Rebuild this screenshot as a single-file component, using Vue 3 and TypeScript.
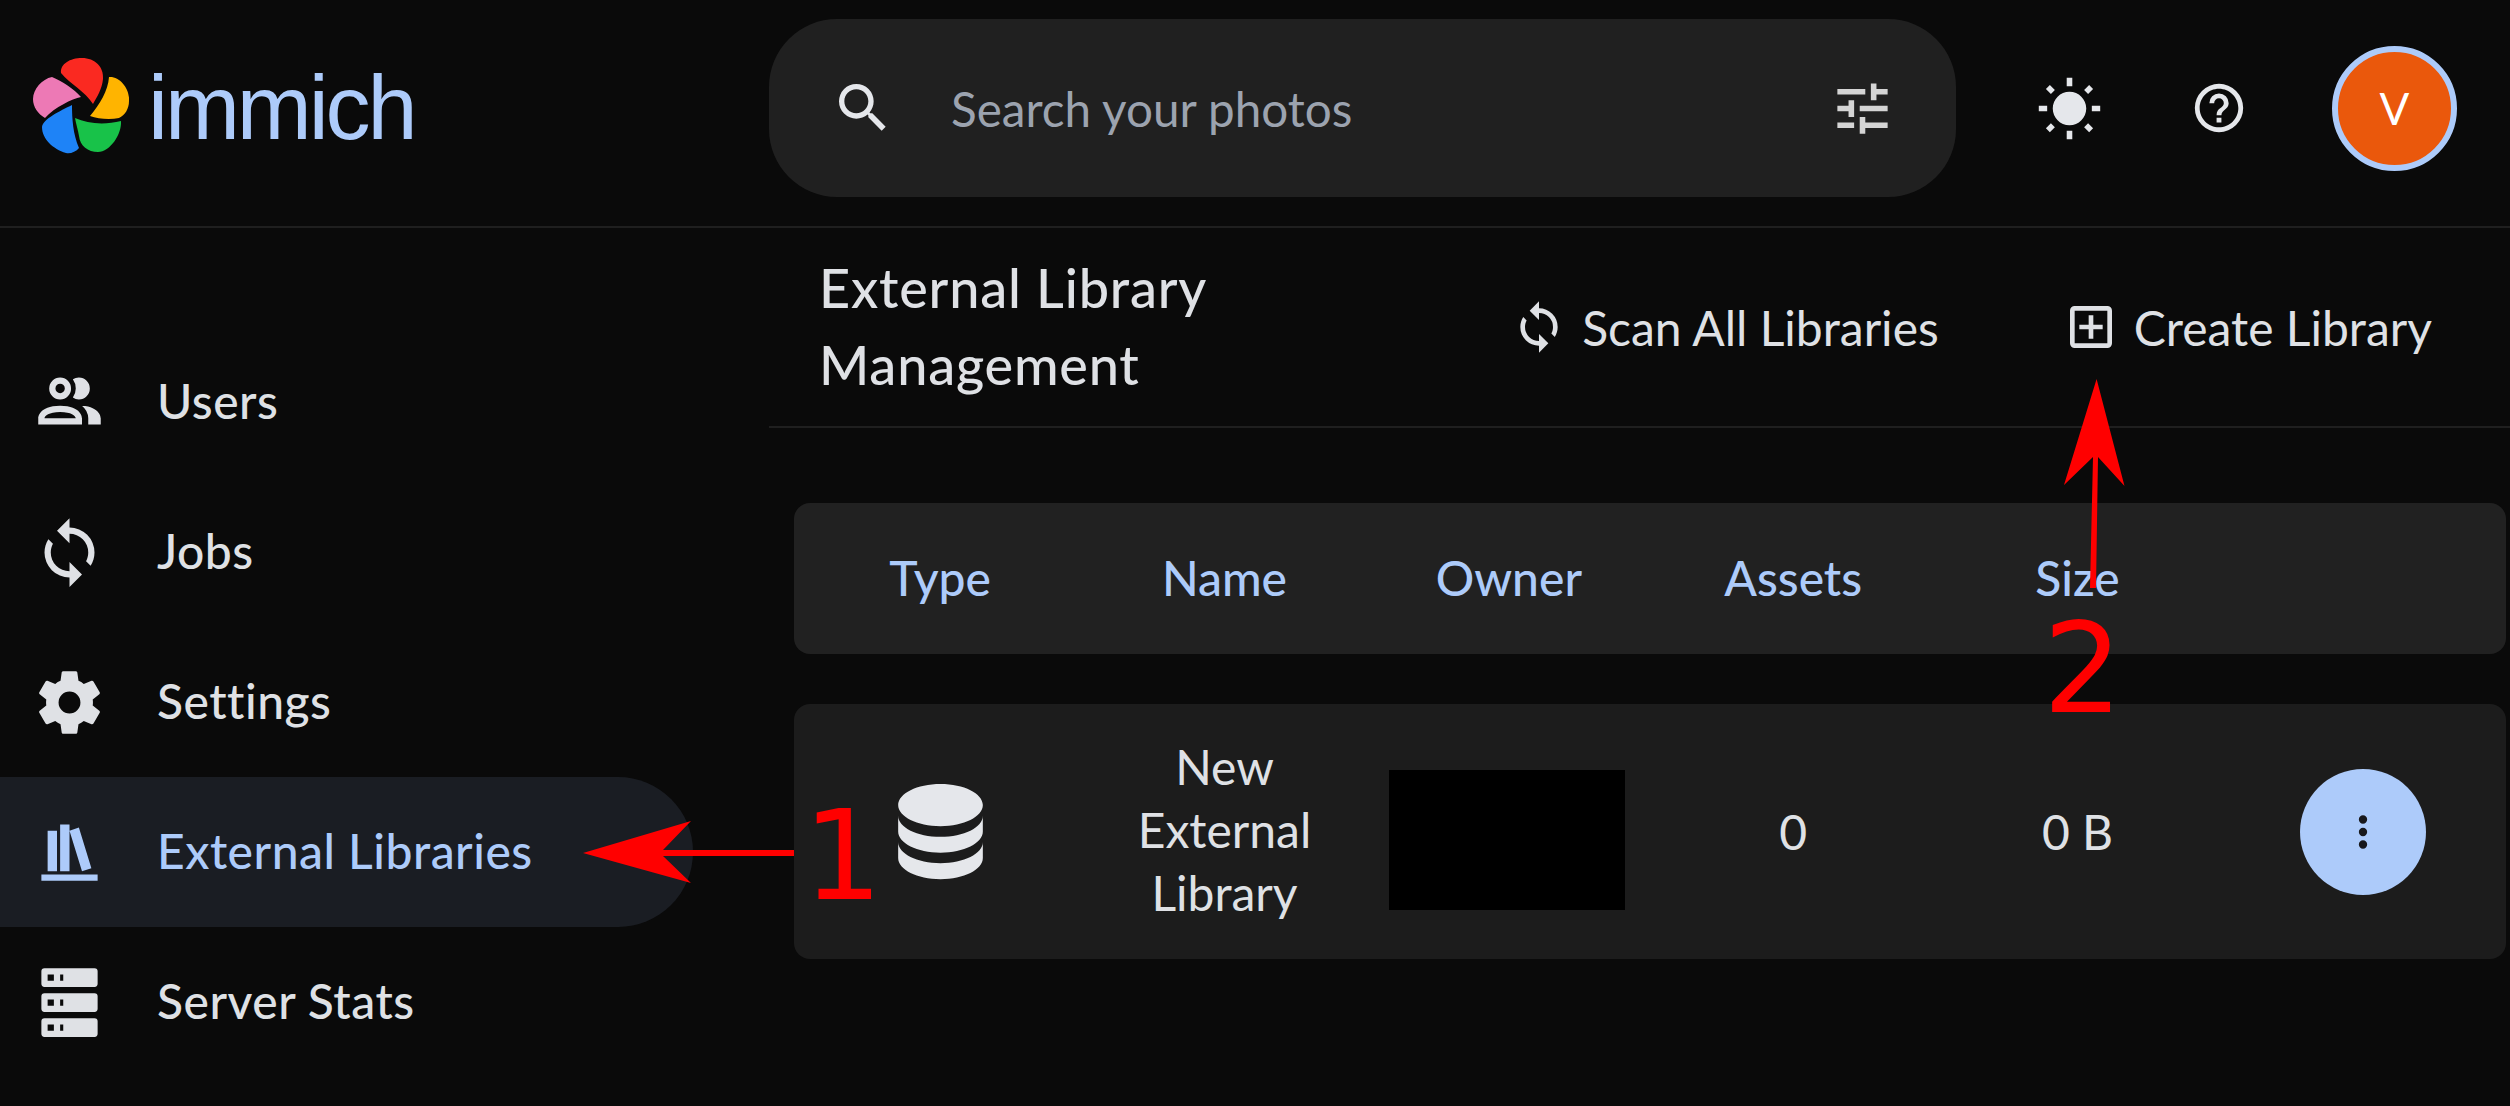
<script setup lang="ts">
type NavItem = { label: string; icon: string; active?: boolean }

const navItems: NavItem[] = [
  {
    label: 'Users',
    icon: 'M13.07 10.41A5 5 0 0 0 13.07 4.59A3.39 3.39 0 0 1 15 4A3.5 3.5 0 0 1 15 11A3.39 3.39 0 0 1 13.07 10.41M5.5 7.5A3.5 3.5 0 1 1 9 11A3.5 3.5 0 0 1 5.5 7.5M7.5 7.5A1.5 1.5 0 1 0 9 6A1.5 1.5 0 0 0 7.5 7.5M16 17V19H2V17S2 13 9 13 16 17 16 17M14 17C13.86 16.22 12.67 15 9 15S4.07 16.31 4 17M15.95 13A5.32 5.32 0 0 1 18 17V19H22V17S22 13.37 15.94 13Z',
  },
  {
    label: 'Jobs',
    icon: 'M12,18A6,6 0 0,1 6,12C6,11 6.25,10.03 6.7,9.2L5.24,7.74C4.46,8.97 4,10.43 4,12A8,8 0 0,0 12,20V23L16,19L12,15M12,4V1L8,5L12,9V6A6,6 0 0,1 18,12C18,13 17.75,13.97 17.3,14.8L18.76,16.26C19.54,15.03 20,13.57 20,12A8,8 0 0,0 12,4Z',
  },
  {
    label: 'Settings',
    icon: 'M12,15.5A3.5,3.5 0 0,1 8.5,12A3.5,3.5 0 0,1 12,8.5A3.5,3.5 0 0,1 15.5,12A3.5,3.5 0 0,1 12,15.5M19.43,12.97C19.47,12.65 19.5,12.33 19.5,12C19.5,11.67 19.47,11.34 19.43,11L21.54,9.37C21.73,9.22 21.78,8.95 21.66,8.73L19.66,5.27C19.54,5.05 19.27,4.96 19.05,5.05L16.56,6.05C16.04,5.66 15.5,5.32 14.87,5.07L14.5,2.42C14.46,2.18 14.25,2 14,2H10C9.75,2 9.54,2.18 9.5,2.42L9.13,5.07C8.5,5.32 7.96,5.66 7.44,6.05L4.95,5.05C4.73,4.96 4.46,5.05 4.34,5.27L2.34,8.73C2.21,8.95 2.27,9.22 2.46,9.37L4.57,11C4.53,11.34 4.5,11.67 4.5,12C4.5,12.33 4.53,12.65 4.57,12.97L2.46,14.63C2.27,14.78 2.21,15.05 2.34,15.27L4.34,18.73C4.46,18.95 4.73,19.03 4.95,18.95L7.44,17.94C7.96,18.34 8.5,18.68 9.13,18.93L9.5,21.58C9.54,21.82 9.75,22 10,22H14C14.25,22 14.46,21.82 14.5,21.58L14.87,18.93C15.5,18.67 16.04,18.34 16.56,17.94L19.05,18.95C19.27,19.03 19.54,18.95 19.66,18.73L21.66,15.27C21.78,15.05 21.73,14.78 21.54,14.63L19.43,12.97Z',
  },
  {
    label: 'External Libraries',
    icon: 'M9 3V18H12V3H9M12 5L16 18L19 17L15 4L12 5M5 5V18H8V5H5M3 19V21H21V19H3Z',
    active: true,
  },
  {
    label: 'Server Stats',
    icon: 'M4,1H20A1,1 0 0,1 21,2V6A1,1 0 0,1 20,7H4A1,1 0 0,1 3,6V2A1,1 0 0,1 4,1M4,9H20A1,1 0 0,1 21,10V14A1,1 0 0,1 20,15H4A1,1 0 0,1 3,14V10A1,1 0 0,1 4,9M4,17H20A1,1 0 0,1 21,18V22A1,1 0 0,1 20,23H4A1,1 0 0,1 3,22V18A1,1 0 0,1 4,17M9,5H10V3H9V5M9,13H10V11H9V13M9,21H10V19H9V21M5,3V5H7V3H5M5,11V13H7V11H5M5,19V21H7V19H5Z',
  },
]

const columns = ['Type', 'Name', 'Owner', 'Assets', 'Size', '']

const icons = {
  magnify: 'M9.5,3A6.5,6.5 0 0,1 16,9.5C16,11.11 15.41,12.59 14.44,13.73L14.71,14H15.5L20.5,19L19,20.5L14,15.5V14.71L13.73,14.44C12.59,15.41 11.11,16 9.5,16A6.5,6.5 0 0,1 3,9.5A6.5,6.5 0 0,1 9.5,3M9.5,5C7,5 5,7 5,9.5C5,12 7,14 9.5,14C12,14 14,12 14,9.5C14,7 12,5 9.5,5Z',
  tune: 'M3,17V19H9V17H3M3,5V7H13V5H3M13,21V19H21V17H13V15H11V21H13M7,9V11H3V13H7V15H9V9H7M21,13V11H11V13H21M15,9H17V7H21V5H17V3H15V9Z',
  sun: 'M3.55 19.09L4.96 20.5L6.76 18.71L5.34 17.29M12 6C8.69 6 6 8.69 6 12S8.69 18 12 18 18 15.31 18 12C18 8.68 15.31 6 12 6M20 13H23V11H20M17.24 18.71L19.04 20.5L20.45 19.09L18.66 17.29M20.45 5L19.04 3.6L17.24 5.39L18.66 6.81M13 1H11V4H13M6.76 5.39L4.96 3.6L3.55 5L5.34 6.81L6.76 5.39M1 13H4V11H1M13 20H11V23H13',
  help: 'M11,18H13V16H11V18M12,2A10,10 0 0,0 2,12A10,10 0 0,0 12,22A10,10 0 0,0 22,12A10,10 0 0,0 12,2M12,20C7.59,20 4,16.41 4,12C4,7.59 7.59,4 12,4C16.41,4 20,7.59 20,12C20,16.41 16.41,20 12,20M12,6A4,4 0 0,0 8,10H10A2,2 0 0,1 12,8A2,2 0 0,1 14,10C14,12 11,11.75 11,15H13C13,12.75 16,12.5 16,10A4,4 0 0,0 12,6Z',
  sync: 'M12,18A6,6 0 0,1 6,12C6,11 6.25,10.03 6.7,9.2L5.24,7.74C4.46,8.97 4,10.43 4,12A8,8 0 0,0 12,20V23L16,19L12,15M12,4V1L8,5L12,9V6A6,6 0 0,1 18,12C18,13 17.75,13.97 17.3,14.8L18.76,16.26C19.54,15.03 20,13.57 20,12A8,8 0 0,0 12,4Z',
  plusBox: 'M19,3H5A2,2 0 0,0 3,5V19A2,2 0 0,0 5,21H19A2,2 0 0,0 21,19V5A2,2 0 0,0 19,3M19,19H5V5H19V19M11,17H13V13H17V11H13V7H11V11H7V13H11V17Z',
  database: 'M12,3C7.58,3 4,4.79 4,7C4,9.21 7.58,11 12,11C16.42,11 20,9.21 20,7C20,4.79 16.42,3 12,3M4,9V12C4,14.21 7.58,16 12,16C16.42,16 20,14.21 20,12V9C20,11.21 16.42,13 12,13C7.58,13 4,11.21 4,9M4,14V17C4,19.21 7.58,21 12,21C16.42,21 20,19.21 20,17V14C20,16.21 16.42,18 12,18C7.58,18 4,16.21 4,14Z',
  dots: 'M12,16A2,2 0 0,1 14,18A2,2 0 0,1 12,20A2,2 0 0,1 10,18A2,2 0 0,1 12,16M12,10A2,2 0 0,1 14,12A2,2 0 0,1 12,14A2,2 0 0,1 10,12A2,2 0 0,1 12,10M12,4A2,2 0 0,1 14,6A2,2 0 0,1 12,8A2,2 0 0,1 10,6A2,2 0 0,1 12,4Z',
}
</script>

<template>
  <div class="page">
    <header class="topbar">
      <div class="brand">
        <svg class="logo" viewBox="33 59 96 96" aria-hidden="true">
          <path fill="#fa2921" d="M93 105C85 92 70 85 61 74C60 65 70 59 82 59C95 59 104 68 103 80C102 90 97 98 93 105Z" />
          <path fill="#ffb400" d="M90 117C100 105 108 92 109 78C120 77 130 90 129 102C129 110 125 116 119 119C110 121 98 120 90 117Z" />
          <path fill="#18c249" d="M75 119C88 125 105 126 121 122C122 135 110 153 98 153C88 153 80 147 79 137C78 131 76 125 75 119Z" />
          <path fill="#1e83f7" d="M72 106C72 120 73 135 79 149C76 153 70 155 66 154C53 150 42 140 42 128C43 120 60 112 72 106Z" />
          <path fill="#ed79b5" d="M81 98C72 100 55 108 45 119C38 115 33 108 33 100C33 90 42 80 52 78C62 82 74 90 81 98Z" />
        </svg>
        <span class="wordmark">immich</span>
      </div>

      <div class="search">
        <svg class="search-icon" viewBox="0 0 24 24"><path :d="icons.magnify" /></svg>
        <span class="placeholder">Search your photos</span>
        <svg class="tune-icon" viewBox="0 0 24 24"><path :d="icons.tune" /></svg>
      </div>

      <div class="header-actions">
        <svg class="sun-icon" viewBox="0 0 24 24"><path :d="icons.sun" /></svg>
        <svg class="help-icon" viewBox="0 0 24 24"><path :d="icons.help" /></svg>
        <div class="avatar">V</div>
      </div>
    </header>

    <div class="content">
      <nav class="sidebar">
        <a
          v-for="item in navItems"
          :key="item.label"
          class="nav-item"
          :class="{ active: item.active }"
        >
          <svg class="nav-icon" viewBox="0 0 24 24"><path :d="item.icon" /></svg>
          <span class="nav-label">{{ item.label }}</span>
        </a>
      </nav>

      <main class="main">
        <div class="main-bar">
          <h1 class="title">External Library<br />Management</h1>
          <div class="main-actions">
            <button type="button" class="action">
              <svg class="action-icon" viewBox="0 0 24 24"><path :d="icons.sync" /></svg>
              Scan All Libraries
            </button>
            <button type="button" class="action">
              <svg class="action-icon" viewBox="0 0 24 24"><path :d="icons.plusBox" /></svg>
              Create Library
            </button>
          </div>
        </div>

        <section class="table">
          <div class="table-head">
            <div v-for="(column, index) in columns" :key="index">{{ column }}</div>
          </div>
          <div class="table-row">
            <div class="cell">
              <svg class="db-icon" viewBox="0 0 24 24"><path :d="icons.database" /></svg>
            </div>
            <div class="cell name-cell">New External Library</div>
            <div class="cell"><div class="redacted"></div></div>
            <div class="cell">0</div>
            <div class="cell">0 B</div>
            <div class="cell">
              <button type="button" class="more">
                <svg class="more-icon" viewBox="0 0 24 24"><path :d="icons.dots" /></svg>
              </button>
            </div>
          </div>
        </section>
      </main>
    </div>

    <svg class="annotations" viewBox="0 0 2510 1106">
      <polygon fill="#ff0000" points="583,853 691,821 663,850 794,850 794,856 663,856 691,883" />
      <polygon fill="#ff0000" points="2096.6,379 2124.5,486 2098,457 2096,588 2090,588 2093,457 2064,485" />
      <text x="803" y="899" class="mark">1</text>
      <text x="2043" y="712" class="mark">2</text>
    </svg>
  </div>
</template>

<style scoped>
.page {
  position: relative;
  width: 2510px;
  height: 1106px;
  overflow: hidden;
  background: #0a0a0a;
  color: #dfe1e5;
  font-family: Lato, "Noto Sans", sans-serif;
}

.topbar {
  display: flex;
  align-items: center;
  height: 216px;
  padding-bottom: 10px;
  border-bottom: 2px solid #1f1f1f;
}

.brand {
  display: flex;
  align-items: center;
  gap: 19px;
  width: 736px;
  padding-left: 33px;
  padding-bottom: 5px;
}

.logo {
  width: 96px;
  height: 96px;
}

.wordmark {
  margin-top: 5px;
  color: #adcbfa;
  font-family: "Liberation Sans", sans-serif;
  font-size: 90px;
  letter-spacing: -3.1px;
  line-height: 1;
}

.search {
  display: flex;
  align-items: center;
  width: 1187px;
  height: 178px;
  padding: 0 60px 0 62px;
  box-sizing: border-box;
  border-radius: 68px;
  background: #202020;
}

.search-icon {
  width: 64px;
  height: 64px;
  fill: #e5e7eb;
}

.placeholder {
  flex: 1;
  margin-left: 56px;
  color: #9ca3af;
  font-size: 47.6px;
}

.tune-icon {
  width: 67px;
  height: 67px;
  fill: #d4d4d4;
}

.header-actions {
  display: flex;
  align-items: center;
  padding-left: 80px;
}

.sun-icon {
  width: 67px;
  height: 67px;
  fill: #e5e7eb;
}

.help-icon {
  width: 58px;
  height: 58px;
  margin-left: 87px;
  fill: #e5e7eb;
}

.avatar {
  display: grid;
  place-items: center;
  width: 125px;
  height: 125px;
  margin-left: 84px;
  box-sizing: border-box;
  border: 6px solid #adcbfa;
  border-radius: 50%;
  background: #ea580c;
  color: #fff;
  font-size: 44px;
}

.content {
  display: flex;
}

.sidebar {
  display: flex;
  flex-direction: column;
  flex: none;
  width: 769px;
  padding-top: 99px;
  box-sizing: border-box;
}

.nav-item {
  display: flex;
  align-items: center;
  gap: 50px;
  width: 693px;
  height: 150px;
  padding-left: 32px;
  box-sizing: border-box;
  border-radius: 0 75px 75px 0;
  font-size: 48px;
  font-weight: 500;
  letter-spacing: 0.5px;
}

.nav-label {
  margin-bottom: 3px;
}

.nav-item.active {
  background: #1a1d23;
  color: #adcbfa;
}

.nav-icon {
  width: 75px;
  height: 75px;
  fill: currentColor;
}

.main {
  flex: 1;
  min-width: 0;
}

.main-bar {
  display: flex;
  align-items: center;
  justify-content: space-between;
  height: 198px;
  padding: 0 78px 0 50px;
  border-bottom: 2px solid #1f1f1f;
}

.title {
  margin: 0 0 3px;
  font-size: 54px;
  font-weight: 500;
  letter-spacing: 0.8px;
  line-height: 77px;
}

.main-actions {
  display: flex;
  gap: 124px;
}

.action {
  display: flex;
  align-items: center;
  gap: 15px;
  padding: 0;
  border: 0;
  background: none;
  color: inherit;
  font: inherit;
  font-size: 48px;
}

.action-icon {
  width: 56px;
  height: 56px;
  fill: currentColor;
}

.table {
  margin: 75px 4px 0 25px;
}

.table-head,
.table-row {
  display: grid;
  grid-template-columns: repeat(6, 1fr);
  align-items: center;
  padding: 0 2px 0 4px;
  border-radius: 16px;
  text-align: center;
}

.table-head {
  height: 151px;
  padding-bottom: 3px;
  box-sizing: border-box;
  background: #212121;
  color: #adcbfa;
  font-size: 48px;
  font-weight: 500;
}

.table-row {
  height: 255px;
  margin-top: 50px;
  background: #1c1c1c;
  font-size: 48px;
  line-height: 63px;
}

.cell {
  display: flex;
  justify-content: center;
}

.name-cell {
  max-width: 190px;
  margin: 0 auto 5px;
}

.db-icon {
  width: 127px;
  height: 127px;
  fill: #e5e7eb;
}

.redacted {
  width: 236px;
  height: 140px;
  margin: 17px 3px 0 0;
  background: #000;
}

.more {
  display: grid;
  place-items: center;
  width: 126px;
  height: 126px;
  margin-left: 2px;
  padding: 0;
  border: 0;
  border-radius: 50%;
  background: #adcbfa;
}

.more-icon {
  width: 50px;
  height: 50px;
  fill: #18181b;
}

.annotations {
  position: absolute;
  inset: 0;
  width: 2510px;
  height: 1106px;
  pointer-events: none;
}

.mark {
  fill: #ff0000;
  font-family: "DejaVu Sans", sans-serif;
  font-size: 125px;
}
</style>

<style>
html,
body {
  margin: 0;
  background: #0a0a0a;
}
</style>
